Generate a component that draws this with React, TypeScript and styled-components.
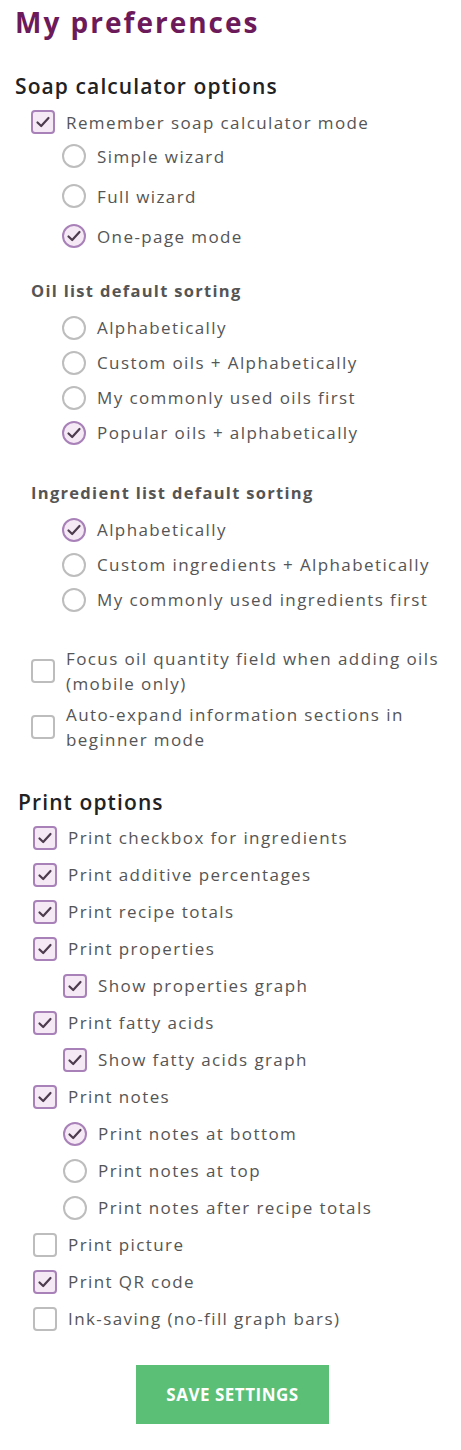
import React from "react"
import styled, { createGlobalStyle } from "styled-components"

const GlobalStyle = createGlobalStyle`
  body {
    margin: 0;
    background: #fff;
    font-family: "Open Sans", "Noto Sans", sans-serif;
  }
`

const Page = styled.div`
  width: 461px;
  padding: 2px 12px 30px 15px;
  box-sizing: border-box;
`

const Title = styled.h1`
  margin: 0;
  font-size: 28px;
  line-height: 40px;
  font-weight: 700;
  letter-spacing: 2px;
  color: #6d1a5b;
`

const Heading = styled.h2<{ $top: number; $left?: number }>`
  margin: ${(p) => p.$top}px 0 0 ${(p) => p.$left || 0}px;
  font-size: 21px;
  line-height: 28px;
  font-weight: 600;
  letter-spacing: 1.1px;
  color: #222;
`

const SubHeading = styled.h3<{ $top: number }>`
  margin: ${(p) => p.$top}px 0 0 16px;
  font-size: 16.5px;
  line-height: 24px;
  font-weight: 700;
  letter-spacing: 1.3px;
  color: #555;
`

const Group = styled.div<{ $top: number }>`
  margin-top: ${(p) => p.$top}px;
  display: flex;
  flex-direction: column;
`

const Row = styled.label<{ $h: number; $indent: number }>`
  display: flex;
  align-items: center;
  height: ${(p) => p.$h}px;
  padding-left: ${(p) => p.$indent}px;
  gap: 11px;
`

const TallRow = styled.label<{ $top: number; $indent: number }>`
  display: flex;
  align-items: center;
  margin-top: ${(p) => p.$top}px;
  padding-left: ${(p) => p.$indent}px;
  gap: 11px;
`

const Label = styled.span`
  font-size: 17px;
  line-height: 25px;
  letter-spacing: 1.4px;
  color: #555;
`

const Box = styled.span<{ $on: boolean; $round?: boolean }>`
  flex: none;
  width: 24px;
  height: 24px;
  box-sizing: border-box;
  border: 2px solid ${(p) => (p.$on ? "#a981b9" : "#bdbdbd")};
  border-radius: ${(p) => (p.$round ? "50%" : "4px")};
  background: ${(p) => (p.$on ? "#f4e9f4" : "#fff")};
  display: flex;
  align-items: center;
  justify-content: center;
`

const SaveButton = styled.button`
  margin: 28px 0 0 121px;
  width: 193px;
  height: 59px;
  border: none;
  background: #5bbf75;
  color: #fff;
  font-family: "Open Sans", sans-serif;
  font-size: 17px;
  font-weight: 700;
  letter-spacing: 0.5px;
`

const Check = () => (
  <svg width="16" height="16" viewBox="0 0 16 16">
    <polyline points="2.5,8.5 6.2,12 13.5,4" fill="none" stroke="#4d3c4d" strokeWidth="2.2" strokeLinecap="round" strokeLinejoin="round" />
  </svg>
)

const Mark = ({ on, round }: { on: boolean; round?: boolean }) => (
  <Box $on={on} $round={round}>{on && <Check />}</Box>
)

type Item = { text: string; on: boolean; round?: boolean; indent: number }

const List = ({ items, h, top }: { items: Item[]; h: number; top: number }) => (
  <Group $top={top}>
    {items.map((it) => (
      <Row key={it.text} $h={h} $indent={it.indent}>
        <Mark on={it.on} round={it.round} />
        <Label>{it.text}</Label>
      </Row>
    ))}
  </Group>
)

const oilSort: Item[] = [
  { text: "Alphabetically", on: false, round: true, indent: 47 },
  { text: "Custom oils + Alphabetically", on: false, round: true, indent: 47 },
  { text: "My commonly used oils first", on: false, round: true, indent: 47 },
  { text: "Popular oils + alphabetically", on: true, round: true, indent: 47 },
]

const ingredientSort: Item[] = [
  { text: "Alphabetically", on: true, round: true, indent: 47 },
  { text: "Custom ingredients + Alphabetically", on: false, round: true, indent: 47 },
  { text: "My commonly used ingredients first", on: false, round: true, indent: 47 },
]

const printItems: Item[] = [
  { text: "Print checkbox for ingredients", on: true, indent: 18 },
  { text: "Print additive percentages", on: true, indent: 18 },
  { text: "Print recipe totals", on: true, indent: 18 },
  { text: "Print properties", on: true, indent: 18 },
  { text: "Show properties graph", on: true, indent: 48 },
  { text: "Print fatty acids", on: true, indent: 18 },
  { text: "Show fatty acids graph", on: true, indent: 48 },
  { text: "Print notes", on: true, indent: 18 },
  { text: "Print notes at bottom", on: true, round: true, indent: 48 },
  { text: "Print notes at top", on: false, round: true, indent: 48 },
  { text: "Print notes after recipe totals", on: false, round: true, indent: 48 },
  { text: "Print picture", on: false, indent: 18 },
  { text: "Print QR code", on: true, indent: 18 },
  { text: "Ink-saving (no-fill graph bars)", on: false, indent: 18 },
]

export default function App() {
  return (
    <>
      <GlobalStyle />
      <Page>
        <Title>My preferences</Title>

        <Heading $top={30}>Soap calculator options</Heading>
        <Group $top={8}>
          <Row $h={28} $indent={16}>
            <Mark on />
            <Label>Remember soap calculator mode</Label>
          </Row>
        </Group>
        <List
          top={0}
          h={40}
          items={[
            { text: "Simple wizard", on: false, round: true, indent: 47 },
            { text: "Full wizard", on: false, round: true, indent: 47 },
            { text: "One-page mode", on: true, round: true, indent: 47 },
          ]}
        />

        <SubHeading $top={23}>Oil list default sorting</SubHeading>
        <List top={7} h={35} items={oilSort} />

        <SubHeading $top={31}>Ingredient list default sorting</SubHeading>
        <List top={7} h={35} items={ingredientSort} />

        <TallRow $top={29} $indent={16}>
          <Mark on={false} />
          <Label>Focus oil quantity field when adding oils (mobile only)</Label>
        </TallRow>
        <TallRow $top={6} $indent={16}>
          <Mark on={false} />
          <Label>Auto-expand information sections in beginner mode</Label>
        </TallRow>

        <Heading $top={36} $left={3}>Print options</Heading>
        <List top={3} h={37} items={printItems} />

        <SaveButton>SAVE SETTINGS</SaveButton>
      </Page>
    </>
  )
}
